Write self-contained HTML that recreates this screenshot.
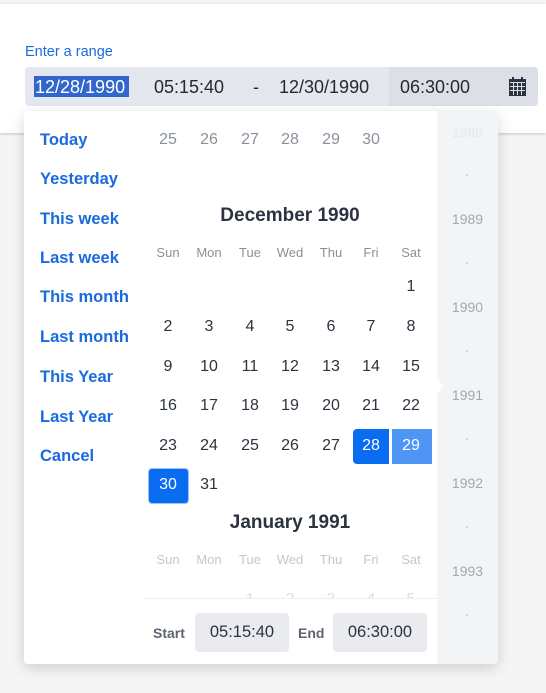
<!DOCTYPE html>
<html><head><style>
body{margin:0;width:546px;height:693px;background:#f5f5f6;font-family:"Liberation Sans",sans-serif;position:relative;overflow:hidden}
.a{position:absolute}
.c{position:absolute;width:40px;text-align:center;line-height:20px;font-size:16px;color:#2c3340}
.p{position:absolute;left:40px;font-size:16.5px;font-weight:bold;color:#1a6ae0;line-height:20px}
.w{position:absolute;width:40px;text-align:center;font-size:13px;color:#8a909a;line-height:16px}
.y{position:absolute;left:437px;width:61px;text-align:center;font-size:14px;color:#a3a8b0;line-height:16px}
.dot{position:absolute;left:466px;width:2px;height:2px;background:#c8ccd2;border-radius:1px}
.h{position:absolute;left:145px;width:290px;text-align:center;font-size:19px;font-weight:bold;color:#2c3340;line-height:22px}
.t{position:absolute;font-size:18px;line-height:20px;color:#222a35}
</style></head><body>
<div class="a" style="left:0;top:4px;width:546px;height:129px;background:#fff;box-shadow:0 1px 3px rgba(0,0,0,.2)"></div>
<div class="a" style="left:25px;top:44px;font-size:14.5px;color:#1a6ae0;line-height:16px">Enter a range</div>
<div class="a" style="left:25px;top:67px;width:513px;height:39px;background:#e4e7ed;border-radius:4px"></div>
<div class="a" style="left:389px;top:67px;width:149px;height:39px;background:#dcdfe6;border-radius:0 4px 4px 0"></div>
<div class="a" style="left:34px;top:76px;width:95px;height:21px;background:#3366cc"></div>
<div class="t" style="left:35px;top:77px;color:#fff">12/28/1990</div>
<div class="t" style="left:154px;top:77px">05:15:40</div>
<div class="t" style="left:253px;top:77px">-</div>
<div class="t" style="left:279px;top:77px">12/30/1990</div>
<div class="t" style="left:400px;top:77px">06:30:00</div>
<svg class="a" style="left:509px;top:77px" width="17" height="19" viewBox="0 0 17 19"><rect x="0" y="2" width="17" height="17" fill="#2c3340"/><rect x="3" y="0" width="2" height="4" fill="#2c3340"/><rect x="12" y="0" width="2" height="4" fill="#2c3340"/><g fill="#dcdfe6"><rect x="1" y="5" width="15" height="1"/><rect x="1" y="9" width="15" height="1"/><rect x="1" y="13" width="15" height="1"/><rect x="4" y="6" width="1" height="12"/><rect x="8" y="6" width="1" height="12"/><rect x="12" y="6" width="1" height="12"/></g></svg>

<div class="a" style="left:24px;top:111px;width:474px;height:553px;background:#fff;border-radius:4px;box-shadow:0 4px 14px rgba(0,0,0,.16);overflow:hidden">
<div class="a" style="left:413px;top:0;width:61px;height:553px;background:#f3f4f6"></div>
<div class="a" style="left:413px;top:268px;width:0;height:0;border-top:7px solid transparent;border-bottom:7px solid transparent;border-left:7px solid #fff"></div>
<div class="a" style="left:120px;top:487px;width:293px;height:1px;background:#eceef1"></div>
</div>

<div class="y" style="top:124px;color:#e6e8eb">1988</div>
<div class="dot" style="top:174px"></div>
<div class="y" style="top:211px">1989</div>
<div class="dot" style="top:262px"></div>
<div class="y" style="top:299px">1990</div>
<div class="dot" style="top:350px"></div>
<div class="y" style="top:387px">1991</div>
<div class="dot" style="top:438px"></div>
<div class="y" style="top:475px">1992</div>
<div class="dot" style="top:526px"></div>
<div class="y" style="top:563px">1993</div>
<div class="dot" style="top:614px"></div>

<div class="p" style="top:130px">Today</div>
<div class="p" style="top:169px">Yesterday</div>
<div class="p" style="top:209px">This week</div>
<div class="p" style="top:248px">Last week</div>
<div class="p" style="top:287px">This month</div>
<div class="p" style="top:327px">Last month</div>
<div class="p" style="top:367px">This Year</div>
<div class="p" style="top:407px">Last Year</div>
<div class="p" style="top:446px">Cancel</div>

<div class="c" style="left:148px;top:130px;color:#8a909a">25</div>
<div class="c" style="left:189px;top:130px;color:#8a909a">26</div>
<div class="c" style="left:230px;top:130px;color:#8a909a">27</div>
<div class="c" style="left:270px;top:130px;color:#8a909a">28</div>
<div class="c" style="left:311px;top:130px;color:#8a909a">29</div>
<div class="c" style="left:351px;top:130px;color:#8a909a">30</div>

<div class="h" style="top:205px">December 1990</div>
<div class="w" style="left:148px;top:245px">Sun</div><div class="w" style="left:189px;top:245px">Mon</div><div class="w" style="left:230px;top:245px">Tue</div><div class="w" style="left:270px;top:245px">Wed</div><div class="w" style="left:311px;top:245px">Thu</div><div class="w" style="left:351px;top:245px">Fri</div><div class="w" style="left:391px;top:245px">Sat</div>

<div class="c" style="left:391px;top:277px">1</div>
<div class="c" style="left:148px;top:317px">2</div><div class="c" style="left:189px;top:317px">3</div><div class="c" style="left:230px;top:317px">4</div><div class="c" style="left:270px;top:317px">5</div><div class="c" style="left:311px;top:317px">6</div><div class="c" style="left:351px;top:317px">7</div><div class="c" style="left:391px;top:317px">8</div>
<div class="c" style="left:148px;top:357px">9</div><div class="c" style="left:189px;top:357px">10</div><div class="c" style="left:230px;top:357px">11</div><div class="c" style="left:270px;top:357px">12</div><div class="c" style="left:311px;top:357px">13</div><div class="c" style="left:351px;top:357px">14</div><div class="c" style="left:391px;top:357px">15</div>
<div class="c" style="left:148px;top:396px">16</div><div class="c" style="left:189px;top:396px">17</div><div class="c" style="left:230px;top:396px">18</div><div class="c" style="left:270px;top:396px">19</div><div class="c" style="left:311px;top:396px">20</div><div class="c" style="left:351px;top:396px">21</div><div class="c" style="left:391px;top:396px">22</div>
<div class="a" style="left:353px;top:429px;width:36px;height:35px;background:#0a6cf0;border-radius:4px 0 0 4px"></div>
<div class="a" style="left:392px;top:429px;width:40px;height:35px;background:#4f95f5"></div>
<div class="c" style="left:148px;top:436px">23</div><div class="c" style="left:189px;top:436px">24</div><div class="c" style="left:230px;top:436px">25</div><div class="c" style="left:270px;top:436px">26</div><div class="c" style="left:311px;top:436px">27</div><div class="c" style="left:351px;top:436px;color:#fff">28</div><div class="c" style="left:391px;top:436px;color:#fff">29</div>
<div class="a" style="left:148px;top:468px;width:39px;height:34px;background:#0a6cf0;border:1px solid #9cc3fa;border-radius:4px"></div>
<div class="c" style="left:148px;top:475px;color:#fff">30</div><div class="c" style="left:189px;top:475px">31</div>

<div class="h" style="top:512px">January 1991</div>
<div class="w" style="left:148px;top:552px;color:#c3c7cd">Sun</div><div class="w" style="left:189px;top:552px;color:#c3c7cd">Mon</div><div class="w" style="left:230px;top:552px;color:#c3c7cd">Tue</div><div class="w" style="left:270px;top:552px;color:#c3c7cd">Wed</div><div class="w" style="left:311px;top:552px;color:#c3c7cd">Thu</div><div class="w" style="left:351px;top:552px;color:#c3c7cd">Fri</div><div class="w" style="left:391px;top:552px;color:#c3c7cd">Sat</div>
<div class="a" style="left:145px;top:582px;width:290px;height:16px;overflow:hidden">
<div class="c" style="left:85px;top:8px;color:#dde0e4">1</div><div class="c" style="left:125px;top:8px;color:#dde0e4">2</div><div class="c" style="left:166px;top:8px;color:#dde0e4">3</div><div class="c" style="left:206px;top:8px;color:#dde0e4">4</div><div class="c" style="left:246px;top:8px;color:#dde0e4">5</div>
</div>

<div class="a" style="left:153px;top:625px;font-size:14px;color:#5d6370;font-weight:bold;line-height:16px">Start</div>
<div class="a" style="left:195px;top:613px;width:94px;height:39px;background:#e9ebef;border-radius:4px;text-align:center;line-height:39px;font-size:16.5px;color:#2c3340">05:15:40</div>
<div class="a" style="left:298px;top:625px;font-size:14px;color:#5d6370;font-weight:bold;line-height:16px">End</div>
<div class="a" style="left:333px;top:613px;width:94px;height:39px;background:#e9ebef;border-radius:4px;text-align:center;line-height:39px;font-size:16.5px;color:#2c3340">06:30:00</div>
</body></html>
